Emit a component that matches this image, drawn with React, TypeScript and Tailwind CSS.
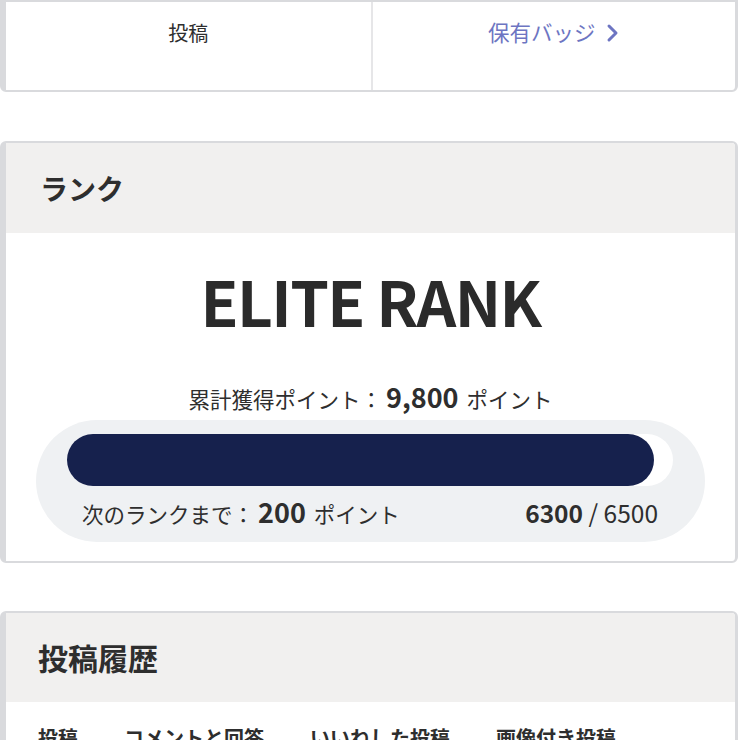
import React from "react";

const font = { fontFamily: '"Noto Sans CJK JP", "Noto Sans", sans-serif' };

const Card: React.FC<{ className?: string; children: React.ReactNode }> = ({ className = "", children }) => (
  <div
    className={`w-[738px] overflow-hidden rounded-md border-t-2 border-b-2 border-l-[6px] border-r-[3px] border-[#d9dadd] bg-white ${className}`}
  >
    {children}
  </div>
);

const App: React.FC = () => {
  const current = 6300;
  const target = 6500;
  const pct = 96.9;

  return (
    <div className="h-[740px] w-[740px] overflow-hidden bg-white text-[#2e2e2e]" style={font}>
      <Card className="rounded-t-none border-t-0">
        <div className="grid h-[88px] grid-cols-2">
          <div className="flex justify-center pt-[17px] text-[20px] leading-7">投稿</div>
          <div className="flex justify-center gap-[10px] border-l-2 border-[#e6e6e8] pt-[16px] text-[21.5px] leading-7 text-[#6d75c2]">
            <span>保有バッジ</span>
            <svg width="14" height="28" viewBox="0 0 14 28" className="mt-[1px]">
              <path d="M3 7 L10 14 L3 21" fill="none" stroke="#6d75c2" strokeWidth="3" strokeLinecap="round" strokeLinejoin="round" />
            </svg>
          </div>
        </div>
      </Card>

      <Card className="mt-[49px]">
        <div className="flex h-[90px] items-center bg-[#f1f0ef] pl-[34px] text-[28px] font-bold">ランク</div>
        <div className="px-[30px] pt-[29px] pb-[19px]">
          <div className="text-center text-[62px] leading-[76px] font-bold tracking-[-1.6px] text-[#2b2b2b]">ELITE RANK</div>
          <div className="mt-[43px] flex items-baseline justify-center text-[21.5px] leading-8">
            <span>累計獲得ポイント：</span>
            <span className="ml-1 mr-2 text-[27px] font-bold">9,800</span>
            <span>ポイント</span>
          </div>
          <div className="mt-[5px] rounded-full bg-[#eff1f3] pt-[14px] pr-[32px] pb-[12px] pl-[31px]">
            <div className="h-[52px] rounded-full bg-white">
              <div className="h-full rounded-full bg-[#16214d]" style={{ width: `${pct}%` }} />
            </div>
            <div className="mt-[10px] flex items-baseline justify-between px-[15px] leading-8">
              <div className="flex items-baseline text-[21.5px]">
                <span>次のランクまで：</span>
                <span className="ml-1 mr-2 text-[27px] font-bold">{target - current}</span>
                <span>ポイント</span>
              </div>
              <div className="text-[24.5px]">
                <span className="font-bold">{current}</span> / {target}
              </div>
            </div>
          </div>
        </div>
      </Card>

      <Card className="mt-[48px]">
        <div className="flex h-[89px] items-center bg-[#f1f0ef] pl-[32px] text-[30px] font-bold">投稿履歴</div>
        <div className="flex gap-[46px] pl-[32px] pt-[20px] text-[20px] font-bold leading-8">
          <span>投稿</span>
          <span>コメントと回答</span>
          <span>いいねした投稿</span>
          <span>画像付き投稿</span>
        </div>
      </Card>
    </div>
  );
};

export default App;
